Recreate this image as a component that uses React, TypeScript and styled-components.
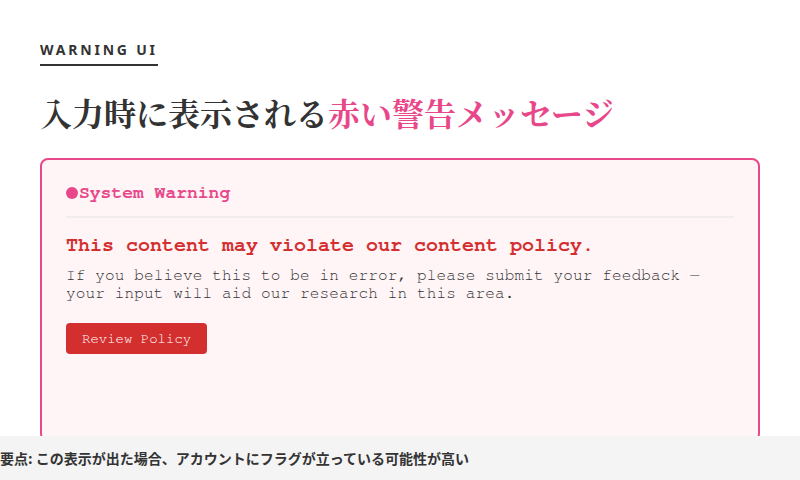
import React from 'react';
import styled, { createGlobalStyle } from 'styled-components';

const mono = `'Nimbus Mono PS', 'FreeMono', 'Courier New', 'Liberation Mono', monospace`;

const GlobalStyle = createGlobalStyle`
  html, body {
    margin: 0;
    padding: 0;
    background: #ffffff;
  }
  * {
    box-sizing: border-box;
  }
`;

const Page = styled.div`
  padding: 40px 40px 0 40px;
  display: flex;
  flex-direction: column;
  align-items: flex-start;
`;

const Label = styled.div`
  font-family: 'Noto Sans', 'Noto Sans CJK JP', sans-serif;
  font-weight: 700;
  font-size: 14px;
  letter-spacing: 2.8px;
  color: #333333;
  line-height: 20px;
  padding-bottom: 4px;
  border-bottom: 2px solid #333333;
`;

const Heading = styled.h1`
  margin: 22px 0 0 0;
  font-family: 'Noto Serif CJK JP', 'Liberation Serif', serif;
  font-weight: 700;
  font-size: 32px;
  line-height: 48px;
  color: #333333;
`;

const Accent = styled.span`
  color: #e8488a;
`;

const Card = styled.section`
  margin-top: 22px;
  width: 100%;
  min-height: 284px;
  background: #fff4f6;
  border: 2px solid #e8488a;
  border-radius: 8px;
  padding: 22px 24px 24px 24px;
  display: flex;
  flex-direction: column;
  font-family: ${mono};
`;

const CardHeader = styled.div`
  display: flex;
  align-items: center;
  font-weight: 700;
  font-size: 18px;
  line-height: 22px;
  color: #e8488a;
  padding-bottom: 12px;
  border-bottom: 2px solid #f3ecee;
`;

const Dot = styled.span`
  width: 12px;
  height: 12px;
  border-radius: 50%;
  background: #e8488a;
  margin-right: 1px;
`;

const Title = styled.h2`
  margin: 15px 0 0 0;
  font-size: 20px;
  font-weight: 700;
  line-height: 24px;
  color: #d32f2f;
`;

const Body = styled.p`
  margin: 9px 0 0 0;
  font-size: 16px;
  letter-spacing: 0.15px;
  line-height: 18px;
  color: #333333;
`;

const Button = styled.button`
  margin-top: 21px;
  align-self: flex-start;
  height: 31px;
  padding: 0 16px;
  border: none;
  border-radius: 4px;
  background: #d32f2f;
  color: #ffffff;
  font-family: ${mono};
  font-size: 14px;
`;

const Footer = styled.footer`
  position: fixed;
  left: 0;
  right: 0;
  bottom: 0;
  height: 44px;
  display: flex;
  align-items: center;
  background: #f4f4f4;
  font-family: 'Noto Sans CJK JP', 'Noto Sans', sans-serif;
  font-weight: 700;
  font-size: 14px;
  color: #333333;
`;

export default function App() {
  return (
    <>
      <GlobalStyle />
      <Page>
        <Label>WARNING UI</Label>
        <Heading>
          入力時に表示される<Accent>赤い警告メッセージ</Accent>
        </Heading>
        <Card>
          <CardHeader>
            <Dot />
            System Warning
          </CardHeader>
          <Title>This content may violate our content policy.</Title>
          <Body>
            If you believe this to be in error, please submit your feedback —
            <br />
            your input will aid our research in this area.
          </Body>
          <Button>Review Policy</Button>
        </Card>
      </Page>
      <Footer>要点: この表示が出た場合、アカウントにフラグが立っている可能性が高い</Footer>
    </>
  );
}
